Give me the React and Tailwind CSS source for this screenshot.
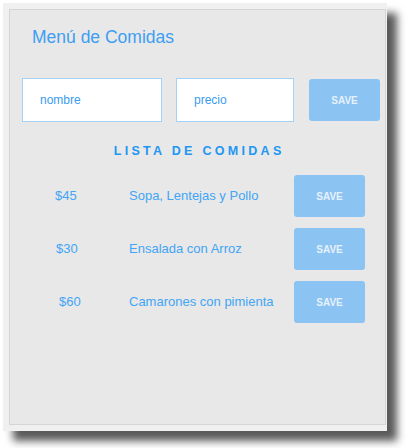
export default function App() {
  const rows = [
    { price: "$45", name: "Sopa, Lentejas y Pollo", pl: "pl-[45px]" },
    { price: "$30", name: "Ensalada con Arroz", pl: "pl-[46px]" },
    { price: "$60", name: "Camarones con pimienta", pl: "pl-[49px]" },
  ];
  return (
    <div
      className="w-[407px] h-[448px] bg-white pt-[3px] pl-[3px]"
      style={{ fontFamily: '"Liberation Sans", Arial, sans-serif' }}
    >
      <div className="w-[384px] h-[428px] bg-[#f0f0f0] pl-[6px] pt-[6px] pr-[1px] pb-[6px] shadow-[10px_10px_8px_#5a5a5a]">
        <div className="w-full h-full border border-[#d5d5d5] bg-[#e8e8e8] flex flex-col">
          <div className="pt-[17px] pl-[22px] text-[17.5px] leading-[20px] text-[#3d9ef2]">
            Menú de Comidas
          </div>
          <div className="mt-[31px] pl-[12px] flex items-center">
            <div className="w-[140px] h-[44px] bg-white border border-[#a6d2f7] flex items-center pl-[17px] text-[12px] text-[#3b9cf0]">
              nombre
            </div>
            <div className="ml-[14px] w-[118px] h-[44px] bg-white border border-[#a6d2f7] flex items-center pl-[17px] text-[12px] text-[#3b9cf0]">
              precio
            </div>
            <div className="ml-[15px] w-[71px] h-[42px] rounded-[3px] bg-[#8bc3f3] flex items-center justify-center text-[10px] font-bold text-[#e6f1fb]">
              SAVE
            </div>
          </div>
          <div className="mt-[22px] h-[15px] leading-[15px] text-center pl-[3.3px] text-[12.5px] font-bold tracking-[3.3px] text-[#2196f3]">
            LISTA DE COMIDAS
          </div>
          <div className="mt-[16px] flex flex-col gap-[11px]">
            {rows.map((r) => (
              <div key={r.price} className="flex items-center h-[42px]">
                <div className={`w-[119px] ${r.pl} text-[13px] text-[#42a5f5]`}>
                  {r.price}
                </div>
                <div className="w-[165px] text-[13px] text-[#42a5f5]">{r.name}</div>
                <div className="w-[71px] h-[42px] rounded-[3px] bg-[#8bc3f3] flex items-center justify-center text-[10px] font-bold text-[#e6f1fb]">
                  SAVE
                </div>
              </div>
            ))}
          </div>
        </div>
      </div>
    </div>
  );
}
